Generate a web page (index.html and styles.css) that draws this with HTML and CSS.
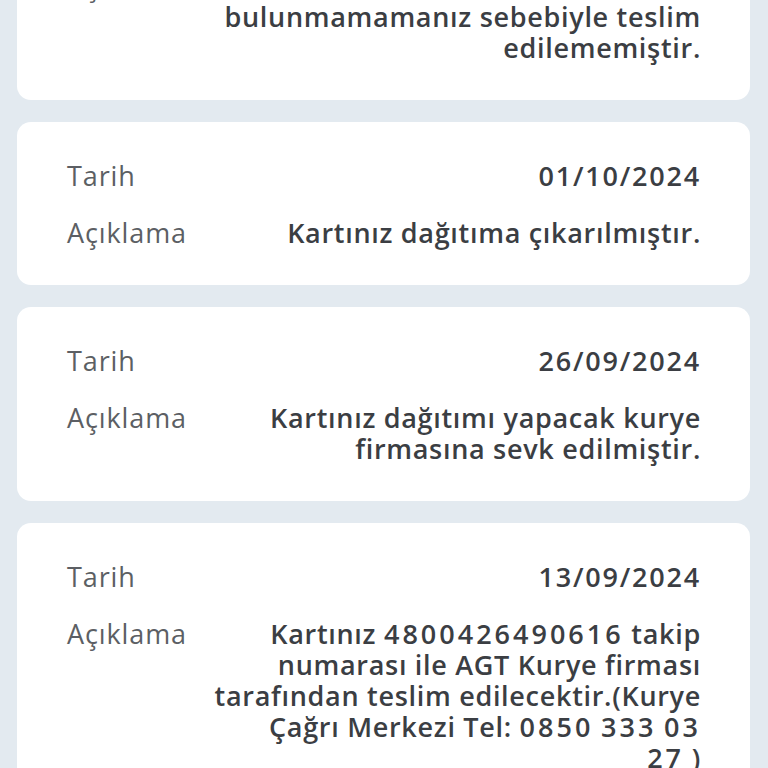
FILE: index.html
```html
<!DOCTYPE html>
<html lang="tr">
<head>
<meta charset="utf-8">
<link rel="stylesheet" href="styles.css">
</head>
<body>
<div class="list">
  <div class="card first">
    <div class="row">
      <div class="label">Açıklama</div>
      <div class="value">Kartınız adresinizde bulunmamamanız sebebiyle teslim edilememiştir.</div>
    </div>
  </div>
  <div class="card">
    <div class="row"><div class="label">Tarih</div><div class="value date">01/10/2024</div></div>
    <div class="row"><div class="label">Açıklama</div><div class="value">Kartınız dağıtıma çıkarılmıştır.</div></div>
  </div>
  <div class="card">
    <div class="row"><div class="label">Tarih</div><div class="value date">26/09/2024</div></div>
    <div class="row"><div class="label">Açıklama</div><div class="value">Kartınız dağıtımı yapacak kurye firmasına sevk edilmiştir.</div></div>
  </div>
  <div class="card">
    <div class="row"><div class="label">Tarih</div><div class="value date">13/09/2024</div></div>
    <div class="row"><div class="label">Açıklama</div><div class="value">Kartınız <span class="num">4800426490616</span> takip numarası ile AGT Kurye firması tarafından teslim edilecektir.(Kurye Çağrı Merkezi Tel: <span class="num">0850</span> <span class="num">333</span> <span class="num">03</span> <span class="num">27</span>&nbsp;)</div></div>
  </div>
</div>
</body>
</html>
```
FILE: styles.css
```css
html, body {
  margin: 0;
  padding: 0;
  background: #e3eaf0;
  height: 768px;
  overflow: hidden;
}
body {
  font-family: "Open Sans", "Lato", sans-serif;
}
.list {
  display: flex;
  flex-direction: column;
  gap: 22px;
  padding: 0 18px 0 17px;
  margin-top: -90px;
}
.card {
  background: #ffffff;
  border-radius: 14px;
  padding: 38px 49px 37px 50px;
  display: flex;
  flex-direction: column;
  gap: 26px;
}
.card.first {
  padding-top: 60px;
}
.row {
  display: grid;
  grid-template-columns: auto 1fr;
  column-gap: 24px;
}
.label {
  font-size: 27px;
  line-height: 31px;
  color: #5c5f64;
  font-weight: 400;
  letter-spacing: 0.9px;
}
.value {
  font-size: 27px;
  line-height: 31px;
  color: #3b3e43;
  font-weight: 600;
  text-align: right;
  letter-spacing: 0.7px;
}
.value.date {
  letter-spacing: 1.8px;
}
.num {
  letter-spacing: 3px;
}
```
